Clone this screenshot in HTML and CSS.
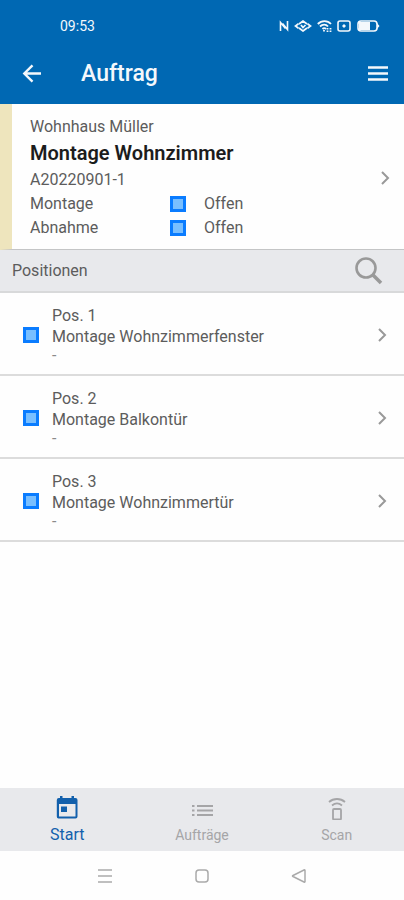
FILE: index.html
```html
<!DOCTYPE html>
<html lang="de">
<head>
<meta charset="utf-8">
<meta name="viewport" content="width=device-width, initial-scale=1">
<title>Auftrag</title>
<link rel="stylesheet" href="styles.css">
</head>
<body>
<header class="top">
  <div class="status">
    <span class="clock">09:53</span>
    <span class="signals">
      <svg width="10" height="12" viewBox="0 0 10 12" fill="none" stroke="currentColor" stroke-width="1.6"><path d="M1.5 11V2.500l5 6M8.500 1v8.500l-5-6"/></svg>
      <svg width="18" height="12" viewBox="0 0 18 12" fill="none" stroke="currentColor" stroke-width="1.7"><path d="M5 4 9 1l4 3M5 8l4 3 4-3M4.500 3.800 1.500 6l3 2.200M13.500 3.800l3 2.200-3 2.200"/><path d="M7 5l2 2.500L11.500 5"/></svg>
      <svg class="wifi" width="15" height="12" viewBox="0 0 15 12" fill="none" stroke="currentColor" stroke-width="1.8"><path d="M.8 4C4.500.2 10.500.2 14 4M3 6.500c2.500-2.500 6-2.500 8 0M5.500 9c1-1 2.500-1 3.500 0"/><path d="M7 10v2M10.500 8v4M13.500 8v4" stroke-dasharray="1.500 1"/></svg>
      <svg width="14" height="12" viewBox="0 0 14 12" fill="none" stroke="currentColor" stroke-width="1.6"><rect x="1" y="1" width="12" height="10" rx="2"/><path d="M5.500 6h3M7 4.500v3" stroke-width="2"/></svg>
      <svg class="battery" width="23" height="12" viewBox="0 0 23 12"><rect x="1" y="1" width="19" height="10" rx="3" fill="none" stroke="currentColor" stroke-width="1.6"/><path d="M2 2h11v8H2zM20 3l2.500 3L20 9z" fill="currentColor"/></svg>
    </span>
  </div>
  <div class="appbar">
    <button class="icon-button" aria-label="Zurück"><svg width="20" height="20" viewBox="0 0 20 20" fill="none" stroke="currentColor" stroke-width="2.4"><path d="M19 9.500H3M10.500 1.300 2.300 9.500l8.200 8.200"/></svg></button>
    <h1>Auftrag</h1>
    <button class="icon-button" aria-label="Menü"><svg width="22" height="16" viewBox="0 0 22 16" fill="none" stroke="currentColor" stroke-width="2.6"><path d="M1 1.500h20M1 7.500h20M1 13.500h20"/></svg></button>
  </div>
</header>
<main>
  <a class="order" href="#auftrag">
    <div class="order-body">
      <p>Wohnhaus Müller</p>
      <h2>Montage Wohnzimmer</h2>
      <p>A20220901-1</p>
      <dl>
        <dt>Montage</dt><dd><i class="state"></i>Offen</dd>
        <dt>Abnahme</dt><dd><i class="state"></i>Offen</dd>
      </dl>
    </div>
    <svg class="chevron" width="9" height="14" viewBox="0 0 9 14"><path d="m1 1 6 6-6 6"/></svg>
  </a>
  <div class="section">
    <h3>Positionen</h3>
    <button class="icon-button search" aria-label="Suchen"><svg width="28" height="28" viewBox="0 0 28 28" fill="none" stroke="currentColor"><circle cx="11" cy="11" r="9.500" stroke-width="2.6"/><path d="m18 18 8 8" stroke-width="3.600"/></svg></button>
  </div>
  <ul class="positions">
    <li><a href="#pos1"><i class="state"></i><div class="position-text"><p>Pos. 1</p><p>Montage Wohnzimmerfenster</p><p class="note">-</p></div><svg class="chevron" width="9" height="14" viewBox="0 0 9 14"><path d="m1 1 6 6-6 6"/></svg></a></li>
    <li><a href="#pos2"><i class="state"></i><div class="position-text"><p>Pos. 2</p><p>Montage Balkontür</p><p class="note">-</p></div><svg class="chevron" width="9" height="14" viewBox="0 0 9 14"><path d="m1 1 6 6-6 6"/></svg></a></li>
    <li><a href="#pos3"><i class="state"></i><div class="position-text"><p>Pos. 3</p><p>Montage Wohnzimmertür</p><p class="note">-</p></div><svg class="chevron" width="9" height="14" viewBox="0 0 9 14"><path d="m1 1 6 6-6 6"/></svg></a></li>
  </ul>
</main>
<nav class="tabs">
  <a class="active" href="#start"><svg width="22" height="24" viewBox="0 0 22 24"><path fill="currentColor" fill-rule="evenodd" d="M4 0h2.500v2h9V0H18v2h1.500Q21.500 2 21.500 4v16.500Q21.500 22.500 19.500 22.500h-17Q.8 22.500.8 20.500V4Q.8 2 2.800 2H4zM3 8v12.500h16.500V8zM5 10.500h6v5.500H5z"/></svg>Start</a>
  <a href="#auftraege"><svg width="22" height="24" viewBox="0 0 22 24" fill="none" stroke="currentColor" stroke-width="2"><path d="M1 10h2.500M1 14.500h2.500M1 19h2.500M6 10h16M6 14.500h16M6 19h16"/></svg>Aufträge</a>
  <a href="#scan"><svg width="22" height="24" viewBox="0 0 22 24" fill="none" stroke="currentColor" stroke-width="1.8"><rect x="7" y="13" width="8" height="10.500" rx="1"/><path d="M3 6c4.500-4 11.500-4 16 0M6 9.500c3-2.500 7-2.500 10 0"/></svg>Scan</a>
</nav>
<div class="system">
  <button class="icon-button" aria-label="Letzte Apps"><svg width="16" height="16" viewBox="0 0 16 16"><path d="M1 2h14M1 8h14M1 14h14"/></svg></button>
  <button class="icon-button" aria-label="Startbildschirm"><svg width="16" height="16" viewBox="0 0 16 16"><rect x="2" y="2" width="12" height="12" rx="3"/></svg></button>
  <button class="icon-button" aria-label="Zurück"><svg width="16" height="16" viewBox="0 0 16 16"><path d="M14 2.500v11Q14 14.500 13 14L2 8.500Q1 8 2 7.500L13 2Q14 1.500 14 2.500z"/></svg></button>
</div>
</body>
</html>
```

FILE: styles.css
```css
* { box-sizing: border-box; }
body {
  margin: 0;
  min-height: 100vh;
  display: flex;
  flex-direction: column;
  background: #fefefe;
  color: #5c5c5c;
  font: 16px/24px Roboto, sans-serif;
}
h1, h2, h3, p, dl, dd, ul { margin: 0; padding: 0; }
ul { list-style: none; }
a { color: inherit; text-decoration: none; }
svg { display: block; flex: none; }
.icon-button { padding: 0; border: 0; background: none; color: inherit; }

.top { background: #0068b3; color: #f4f8fc; }
.status {
  display: flex;
  align-items: center;
  justify-content: space-between;
  height: 44px;
  padding: 8px 24px 0 60px;
}
.clock { font-size: 14px; }
.signals { display: flex; align-items: center; }
.signals svg { margin-left: 5px; }
.signals .battery { margin-left: 6px; }
.appbar {
  display: flex;
  align-items: center;
  height: 60px;
  padding: 0 15px 0 22px;
}
.appbar h1 {
  flex: 1;
  margin-left: 39px;
  font-size: 23px;
  font-weight: 500;
}

.order {
  display: flex;
  align-items: center;
  padding: 11px 14px 9px 18px;
  border-left: 12px solid #eee5bd;
  border-bottom: 1px solid #c4c5c6;
}
.order-body { flex: 1; }
.order h2 {
  color: #1c1c1c;
  font-size: 20px;
  font-weight: 600;
  line-height: 29px;
}
.order dl {
  display: grid;
  grid-template-columns: 140px 1fr;
}
.order dd {
  display: flex;
  align-items: center;
  gap: 18px;
}
.state {
  flex: none;
  width: 16px;
  height: 16px;
  border: 3px solid #0a7cff;
  background: #79bfff;
}
.chevron { fill: none; stroke: #999; stroke-width: 2; }

.section {
  display: flex;
  align-items: center;
  justify-content: space-between;
  height: 43px;
  padding: 0 21px 0 12px;
  border-bottom: 2px solid #d8d9da;
  background: #e8e9ec;
}
.section h3 { font-size: 16px; font-weight: 400; }
.search { color: #999; }

.positions a {
  display: flex;
  align-items: center;
  padding: 12px 17px 10px 23px;
  border-bottom: 2px solid #dcdcdc;
}
.position-text { flex: 1; margin-left: 13px; line-height: 21px; }
.position-text .note { color: #8a8a8a; line-height: 17px; }

.tabs {
  display: grid;
  grid-template-columns: repeat(3, 1fr);
  margin-top: auto;
  background: #e8e9ec;
  color: #a5a5a7;
  font-size: 14px;
}
.tabs a {
  display: flex;
  flex-direction: column;
  align-items: center;
  gap: 3px;
  height: 63px;
  padding-top: 8px;
}
.tabs .active { color: #1260ac; font-size: 16px; }

.system {
  display: flex;
  align-items: center;
  justify-content: center;
  gap: 81px;
  height: 49px;
}
.system svg { fill: none; stroke: #aaa; stroke-width: 1.5; }
main { flex: 1; }
```
